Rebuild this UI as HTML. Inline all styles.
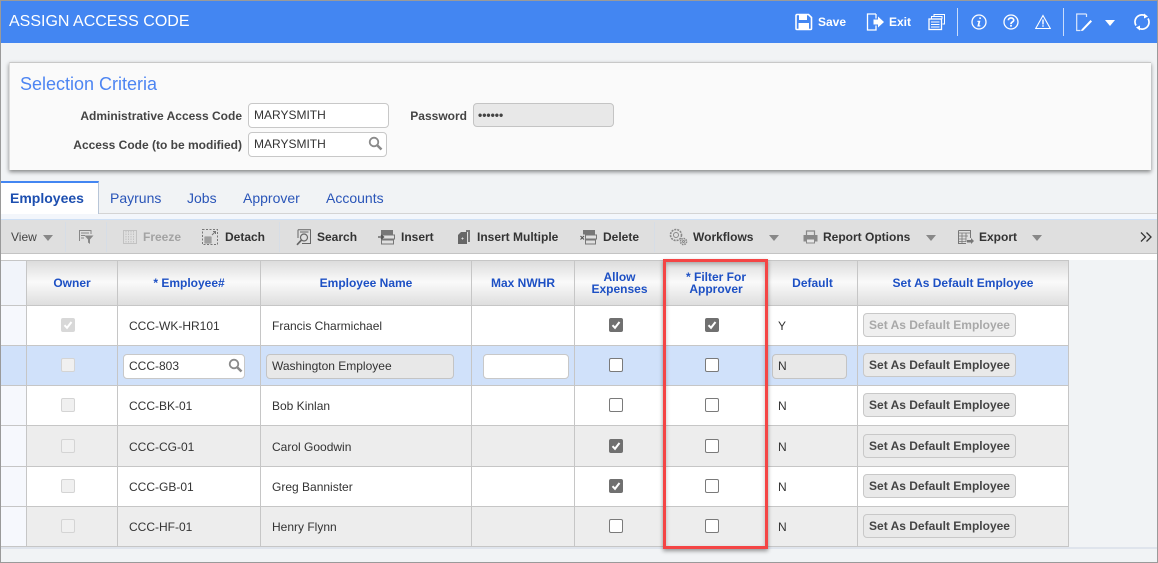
<!DOCTYPE html>
<html><head><meta charset="utf-8"><style>
html,body{margin:0;padding:0}
body{width:1158px;height:563px;position:relative;overflow:hidden;background:#f1f3f5;font-family:"Liberation Sans",sans-serif;font-size:12px;color:#333}
div,span,svg{position:absolute;box-sizing:border-box}
.t{white-space:nowrap;line-height:14px}
.b{font-weight:bold}
.l{font-weight:bold;color:#444;text-align:right}
.inp{background:#fff;border:1px solid #c8c8c8;border-radius:4px;height:24px}
.dis{background:#e8e8e8;border:1px solid #c4c4c4;border-radius:4px;height:24px}
.tab{color:#2a55b8;font-size:14px;top:190px;line-height:16px;white-space:nowrap}
.tb{top:230px;font-weight:bold;color:#333;line-height:14px;white-space:nowrap}
.th{color:#1d50c4;font-weight:bold;text-align:center;line-height:12px;background:none}
.row{left:0;width:1069px;border-bottom:1px solid #c6c6c6}
.vl{top:260px;height:287px;width:1px;background:#c6c6c6}
.c{width:14px;height:14px;margin:-1px 0 0 -1px;border-radius:2px;border:1px solid #7a7a7a;background:#fff}
.c.on{background:#707070;border-color:#707070}
.c.off{background:#f0f0f0;border-color:#d4d4d4}
.c.dim{background:#d8d8d8;border-color:#d8d8d8}
.c svg{left:0;top:0}
.btn{left:863px;width:153px;height:24px;background:#e9e9e9;border:1px solid #c8c8c8;border-radius:4px;font-weight:bold;text-align:center;line-height:23px;color:#444;white-space:nowrap}
.tri{width:0;height:0;border-left:5px solid transparent;border-right:5px solid transparent;border-top:6px solid #888;top:235px}
.sep{top:222px;height:30px;width:1px;background:#d6dde6}
</style></head><body>

<!-- outer frame -->
<div style="left:0;top:0;width:1158px;height:563px;border:1px solid #9a9a9a;border-bottom:1px solid #9a9a9a;z-index:20;pointer-events:none"></div>

<!-- header -->
<div style="left:0;top:0;width:1158px;height:43px;background:#4386f2"></div>
<div class="t" style="left:9px;top:13px;color:#fff;font-size:16px;line-height:18px">ASSIGN ACCESS CODE</div>

<svg style="left:795px;top:13px" width="18" height="18" viewBox="0 0 18 18"><path d="M1 2.500A1 1 0 0 1 2 1.500H13.500L16.500 4.500V15.500A1 1 0 0 1 15.500 16.500H2A1 1 0 0 1 1 15.500Z" fill="none" stroke="#fff" stroke-width="1.600"/><rect x="4" y="2" width="8" height="5" fill="#fff"/><rect x="3.500" y="10" width="10.500" height="6" fill="#fff"/></svg>
<div class="t b" style="left:818px;top:15px;color:#fff">Save</div>
<svg style="left:866px;top:13px" width="19" height="18" viewBox="0 0 19 18"><path d="M10 1H1.500V17H10V12.500M10 5.500V1" fill="none" stroke="#fff" stroke-width="1.300"/><path d="M7.500 6.500H12V3.500L18 9L12 14.500V11.500H7.500Z" fill="#fff"/></svg>
<div class="t b" style="left:889px;top:15px;color:#fff">Exit</div>
<svg style="left:928px;top:13px" width="18" height="18" viewBox="0 0 18 18" fill="none" stroke="#fff"><path d="M6 4V1.500H16.500V11H14.500"/><path d="M3.500 6V3.500H14V6"/><rect x="1" y="6" width="12.500" height="10.500" fill="#4386f2" stroke-width="1.300"/><path d="M3 9H11.500M3 11.500H11.500M3 14H11.500"/></svg>
<div style="left:957px;top:8px;width:1px;height:28px;background:#c9dcfb"></div>
<svg style="left:971px;top:14px" width="16" height="16" viewBox="0 0 16 16"><circle cx="8" cy="8" r="7" fill="none" stroke="#fff" stroke-width="1.300"/><path d="M8.300 3.400h1.600v1.600H8.300zM6.500 6.800H9.400L8.300 11.400H9.500L9.200 12.500H6.300L7.400 7.900H6.300Z" fill="#fff"/></svg>
<svg style="left:1003px;top:14px" width="16" height="16" viewBox="0 0 16 16"><circle cx="8" cy="8" r="7" fill="none" stroke="#fff" stroke-width="1.300"/><path d="M5.400 6.200C5.400 3.200 10.700 3.200 10.700 6.200C10.700 8 8 8 8 10" fill="none" stroke="#fff" stroke-width="1.700"/><rect x="7.100" y="10.800" width="1.800" height="1.800" fill="#fff"/></svg>
<svg style="left:1035px;top:14px" width="16" height="16" viewBox="0 0 16 16"><path d="M8 1.500L15.300 14.500H.7Z" fill="none" stroke="#fff" stroke-width="1.100"/><path d="M7.300 5.500H8.700V10.500H7.300ZM7.300 11.300H8.700V12.800H7.300Z" fill="#fff"/></svg>
<div style="left:1063px;top:8px;width:1px;height:28px;background:#c9dcfb"></div>
<svg style="left:1076px;top:13px" width="17" height="19" viewBox="0 0 17 19"><path d="M10.500 1H.7V17.500H4.500M10.500 1V4" fill="none" stroke="#dbe7fc" stroke-width="1.200"/><path d="M5.500 16.500L14.500 7L16 8.500L7 17.800L5 18Z" fill="#fff"/></svg>
<div style="left:1105px;top:20px;width:0;height:0;border-left:5px solid transparent;border-right:5px solid transparent;border-top:6px solid #fff"></div>
<svg style="left:1133px;top:13px" width="18" height="18" viewBox="0 0 18 18" fill="none" stroke="#fff" stroke-width="1.700"><path d="M3 12.500A7 7 0 0 1 12.500 2.800"/><path d="M15 5.500A7 7 0 0 1 5.500 15.200"/><path d="M11 .5L15 3.500L11 5.500Z" fill="#fff" stroke="none"/><path d="M7 17.500L3 14.500L7 12.500Z" fill="#fff" stroke="none"/></svg>

<!-- selection criteria panel -->
<div style="left:9px;top:62px;width:1142px;height:108px;background:#fafafa;border-top:1px solid #c8c8c8;border-left:1px solid #ddd;box-shadow:0 2px 4px rgba(0,0,0,.45)"></div>
<div class="t" style="left:20px;top:74px;font-size:18px;line-height:20px;color:#4d85f2">Selection Criteria</div>
<div class="t l" style="right:916px;top:109px">Administrative Access Code</div>
<div class="inp" style="left:248px;top:103px;width:141px;height:25px"></div>
<div class="t" style="left:254px;top:108px">MARYSMITH</div>
<div class="t l" style="right:691px;top:109px">Password</div>
<div class="dis" style="left:473px;top:103px;width:141px"></div>
<div class="t b" style="left:478px;top:108px;font-size:12px;letter-spacing:0;color:#444">••••••</div>
<div class="t l" style="right:916px;top:138px">Access Code (to be modified)</div>
<div class="inp" style="left:248px;top:132px;width:139px;height:25px"></div>
<div class="t" style="left:254px;top:137px">MARYSMITH</div>
<svg style="left:368px;top:136px" width="15" height="15" viewBox="0 0 15 15"><circle cx="6" cy="6" r="4.300" fill="none" stroke="#8a8a8a" stroke-width="1.800"/><path d="M9.200 9.200L13.500 13.500" stroke="#8a8a8a" stroke-width="2.500"/></svg>

<!-- tabs -->
<div style="left:0;top:213px;width:1158px;height:1px;background:#d4d4d4"></div>
<div style="left:1px;top:181px;width:98px;height:33px;background:#fff;border-top:2px solid #4386f2;border-right:1px solid #b8c6d8"></div>
<div class="tab b" style="left:10px;color:#1d4fb0">Employees</div>
<div class="tab" style="left:110px">Payruns</div>
<div class="tab" style="left:187px">Jobs</div>
<div class="tab" style="left:243px">Approver</div>
<div class="tab" style="left:326px">Accounts</div>
<div style="left:0;top:214px;width:1158px;height:5px;background:#f3f6fb"></div>

<!-- toolbar -->
<div style="left:0;top:219px;width:1158px;height:35px;background:#dfdfdf;border-top:1px solid #cfe0f5;border-bottom:1px solid #c4c4c4"></div>
<div style="left:0;top:254px;width:1158px;height:6px;background:#fff"></div>
<div class="t" style="left:11px;top:230px;color:#444">View</div>
<div class="tri" style="left:43px"></div>
<div class="sep" style="left:65px"></div>
<svg style="left:78px;top:229px" width="16" height="16" viewBox="0 0 16 16" fill="none" stroke="#888"><path d="M1.500 12V1.500H13V5M3 4H11M3 6.500H7M3 9H6"/><path d="M6.500 6.500H15.500L12 10.500V15L10 13.500V10.500Z" fill="#888" stroke="none"/></svg>
<div class="sep" style="left:106px"></div>
<svg style="left:123px;top:230px" width="14" height="14" viewBox="0 0 14 14" fill="none" stroke="#c2c2c2"><rect x=".5" y=".5" width="13" height="13"/><path d="M3 1V13M5.500 1V13M8 1V13M10.500 1V13" stroke-dasharray="1.500 1"/></svg>
<div class="tb" style="left:143px;color:#a3a3a3">Freeze</div>
<svg style="left:202px;top:229px" width="16" height="16" viewBox="0 0 16 16" fill="none" stroke="#777"><rect x=".5" y=".5" width="15" height="15" stroke-dasharray="2 1.500"/><path d="M3 8H9V14H3ZM3 10H9M3 12H9M5 8V14M7 8V14" stroke-width=".8"/><path d="M10 6L13.500 2.500M11 2.500H13.500V5"/></svg>
<div class="tb" style="left:225px">Detach</div>
<div class="sep" style="left:279px"></div>
<svg style="left:296px;top:229px" width="16" height="17" viewBox="0 0 16 17" fill="none" stroke="#666"><path d="M2 .7H14.500V14.500H6M2 .7V9M4 3H12.500"/><circle cx="8" cy="8.500" r="3.500" stroke-width="1.200"/><path d="M5.500 11L1 15.800" stroke-width="1.700"/></svg>
<div class="tb" style="left:317px">Search</div>
<svg style="left:378px;top:230px" width="17" height="15" viewBox="0 0 17 15" fill="none" stroke="#777"><rect x="3.500" y=".5" width="11" height="3.500" fill="#777"/><rect x="3.500" y="5" width="13" height="4"/><rect x="3.500" y="10" width="12" height="4"/><path d="M0 7H5M3 5L5.500 7L3 9" stroke="#555" stroke-width="1.300"/></svg>
<div class="tb" style="left:401px">Insert</div>
<svg style="left:458px;top:229px" width="12" height="16" viewBox="0 0 12 16"><path d="M8 1H12V13H10V3H8Z" fill="#777"/><path d="M3 3H9V15H0V6Z" fill="#666"/><path d="M3.500 9.500H5.500M4.500 8.500V10.500" stroke="#ddd"/></svg>
<div class="tb" style="left:477px">Insert Multiple</div>
<svg style="left:580px;top:230px" width="17" height="15" viewBox="0 0 17 15" fill="none" stroke="#777"><rect x="3.500" y=".5" width="11" height="3.500" fill="#777"/><rect x="5.500" y="5" width="11" height="4"/><rect x="5.500" y="10" width="10" height="4"/><path d="M.5 6L4 9.500M4 6L.5 9.500" stroke="#555" stroke-width="1.100"/></svg>
<div class="tb" style="left:603px">Delete</div>
<div class="sep" style="left:654px"></div>
<svg style="left:669px;top:228px" width="19" height="18" viewBox="0 0 19 18" fill="none" stroke="#888"><circle cx="7" cy="7" r="5.500" stroke-dasharray="2 1" stroke-width="1.600"/><circle cx="7" cy="7" r="2.500"/><circle cx="14.500" cy="13.500" r="3" stroke-dasharray="1.500 .8" stroke-width="1.600"/><circle cx="14.500" cy="13.500" r="1"/></svg>
<div class="tb" style="left:693px">Workflows</div>
<div class="tri" style="left:769px"></div>
<svg style="left:803px;top:230px" width="15" height="14" viewBox="0 0 15 14" fill="none" stroke="#888"><path d="M3.500 5V1H11.500V5" stroke-width="1.200"/><path d="M1 5.500H14V11H1Z" fill="#888"/><path d="M3.500 9H11.500V13H3.500Z" fill="#e6e6e6"/></svg>
<div class="tb" style="left:823px">Report Options</div>
<div class="tri" style="left:926px"></div>
<svg style="left:958px;top:230px" width="16" height="15" viewBox="0 0 16 15" fill="none" stroke="#777"><path d="M.5 .5H12.500V8M.5 .5V13.500H8" stroke-width="1"/><path d="M.5 3H12.500M.5 6H10M.5 9H8M.5 11.500H8M4 3V13M8 3V12" stroke-width=".8"/><path d="M9 10H13V8L16 11L13 14V12.500H9Z" fill="#777" stroke="none"/></svg>
<div class="tb" style="left:979px">Export</div>
<div class="tri" style="left:1032px"></div>
<svg style="left:1140px;top:232px" width="13" height="10" viewBox="0 0 13 10" fill="none" stroke="#333" stroke-width="1.300"><path d="M1 .5L5.500 5L1 9.500M6.500 .5L11 5L6.500 9.500"/></svg>

<!-- grid -->
<div style="left:0;top:260px;width:1069px;height:46px;background:linear-gradient(#dcdcdc,#fafafa 48%,#dedede);border-top:1px solid #c6c6c6;border-bottom:1px solid #c6c6c6"></div>
<div style="left:1px;top:261px;width:25px;height:44px;background:#f1f4fa"></div>
<div class="row" style="top:306px;height:40px;background:#fff"></div>
<div class="row" style="top:346px;height:40px;background:#d0e1fa"></div>
<div class="row" style="top:386px;height:40px;background:#fff"></div>
<div class="row" style="top:426px;height:41px;background:#ededed"></div>
<div class="row" style="top:467px;height:40px;background:#fff"></div>
<div class="row" style="top:507px;height:40px;background:#ededed"></div>
<div style="left:1px;top:306px;width:25px;height:240px;background:#f6f8fd"></div>
<div style="left:1px;top:345px;width:25px;height:1px;background:#c6c6c6"></div>
<div style="left:1px;top:385px;width:25px;height:1px;background:#c6c6c6"></div>
<div style="left:1px;top:425px;width:25px;height:1px;background:#c6c6c6"></div>
<div style="left:1px;top:466px;width:25px;height:1px;background:#c6c6c6"></div>
<div style="left:1px;top:506px;width:25px;height:1px;background:#c6c6c6"></div>
<div style="left:1px;top:346px;width:25px;height:39px;background:#d0e1fa"></div>
<div style="left:0;top:547px;width:1158px;height:2px;background:#dfe4ec"></div>

<div class="vl" style="left:26px"></div>
<div class="vl" style="left:117px"></div>
<div class="vl" style="left:260px"></div>
<div class="vl" style="left:471px"></div>
<div class="vl" style="left:574px"></div>
<div class="vl" style="left:664px"></div>
<div class="vl" style="left:767px"></div>
<div class="vl" style="left:857px"></div>
<div class="vl" style="left:1068px"></div>

<!-- headers -->
<div class="t th" style="left:27px;width:90px;top:277px">Owner</div>
<div class="t th" style="left:118px;width:142px;top:277px">* Employee#</div>
<div class="t th" style="left:261px;width:210px;top:277px">Employee Name</div>
<div class="t th" style="left:472px;width:102px;top:277px">Max NWHR</div>
<div class="t th" style="left:575px;width:89px;top:271px">Allow<br>Expenses</div>
<div class="t th" style="left:665px;width:102px;top:271px">* Filter For<br>Approver</div>
<div class="t th" style="left:768px;width:89px;top:277px">Default</div>
<div class="t th" style="left:858px;width:210px;top:277px">Set As Default Employee</div>

<!-- owner checks -->
<div class="c dim" style="left:62px;top:319px"><svg width="12" height="12" viewBox="0 0 12 12"><path d="M2.500 6.200L5 8.800L9.500 3" fill="none" stroke="#fff" stroke-width="2"/></svg></div>
<div class="c off" style="left:62px;top:359px"></div>
<div class="c off" style="left:62px;top:399px"></div>
<div class="c off" style="left:62px;top:440px"></div>
<div class="c off" style="left:62px;top:480px"></div>
<div class="c off" style="left:62px;top:520px"></div>

<!-- employee# -->
<div class="t" style="left:129px;top:319px">CCC-WK-HR101</div>
<div class="inp" style="left:123px;top:354px;width:122px;height:25px"></div>
<div class="t" style="left:129px;top:359px">CCC-803</div>
<svg style="left:228px;top:358px" width="15" height="15" viewBox="0 0 15 15"><circle cx="6" cy="6" r="4.300" fill="none" stroke="#8a8a8a" stroke-width="1.800"/><path d="M9.200 9.200L13.500 13.500" stroke="#8a8a8a" stroke-width="2.500"/></svg>
<div class="t" style="left:129px;top:399px">CCC-BK-01</div>
<div class="t" style="left:129px;top:440px">CCC-CG-01</div>
<div class="t" style="left:129px;top:480px">CCC-GB-01</div>
<div class="t" style="left:129px;top:520px">CCC-HF-01</div>

<!-- names -->
<div class="t" style="left:272px;top:319px">Francis Charmichael</div>
<div class="dis" style="left:266px;top:354px;width:188px;height:25px"></div>
<div class="t" style="left:272px;top:359px">Washington Employee</div>
<div class="t" style="left:272px;top:399px">Bob Kinlan</div>
<div class="t" style="left:272px;top:440px">Carol Goodwin</div>
<div class="t" style="left:272px;top:480px">Greg Bannister</div>
<div class="t" style="left:272px;top:520px">Henry Flynn</div>

<div class="inp" style="left:483px;top:354px;width:86px;height:25px"></div>

<!-- allow expenses -->
<div class="c on" style="left:610px;top:319px"><svg width="12" height="12" viewBox="0 0 12 12"><path d="M2.500 6.200L5 8.800L9.500 3" fill="none" stroke="#fff" stroke-width="2"/></svg></div>
<div class="c" style="left:610px;top:359px"></div>
<div class="c" style="left:610px;top:399px"></div>
<div class="c on" style="left:610px;top:440px"><svg width="12" height="12" viewBox="0 0 12 12"><path d="M2.500 6.200L5 8.800L9.500 3" fill="none" stroke="#fff" stroke-width="2"/></svg></div>
<div class="c on" style="left:610px;top:480px"><svg width="12" height="12" viewBox="0 0 12 12"><path d="M2.500 6.200L5 8.800L9.500 3" fill="none" stroke="#fff" stroke-width="2"/></svg></div>
<div class="c" style="left:610px;top:520px"></div>

<!-- filter -->
<div class="c on" style="left:706px;top:319px"><svg width="12" height="12" viewBox="0 0 12 12"><path d="M2.500 6.200L5 8.800L9.500 3" fill="none" stroke="#fff" stroke-width="2"/></svg></div>
<div class="c" style="left:706px;top:359px"></div>
<div class="c" style="left:706px;top:399px"></div>
<div class="c" style="left:706px;top:440px"></div>
<div class="c" style="left:706px;top:480px"></div>
<div class="c" style="left:706px;top:520px"></div>

<!-- default -->
<div class="t" style="left:778px;top:319px">Y</div>
<div class="dis" style="left:772px;top:354px;width:75px;height:25px"></div>
<div class="t" style="left:778px;top:359px">N</div>
<div class="t" style="left:778px;top:399px">N</div>
<div class="t" style="left:778px;top:440px">N</div>
<div class="t" style="left:778px;top:480px">N</div>
<div class="t" style="left:778px;top:520px">N</div>

<!-- buttons -->
<div class="btn" style="top:313px;color:#a8a8a8;background:#efefef">Set As Default Employee</div>
<div class="btn" style="top:353px">Set As Default Employee</div>
<div class="btn" style="top:393px">Set As Default Employee</div>
<div class="btn" style="top:434px">Set As Default Employee</div>
<div class="btn" style="top:474px">Set As Default Employee</div>
<div class="btn" style="top:514px">Set As Default Employee</div>

<!-- red highlight -->
<div style="left:663px;top:259px;width:105px;height:290px;border:3px solid #f44545;box-shadow:0 2px 4px rgba(0,0,0,.4),inset 0 2px 4px rgba(0,0,0,.25);z-index:10"></div>
</body></html>
